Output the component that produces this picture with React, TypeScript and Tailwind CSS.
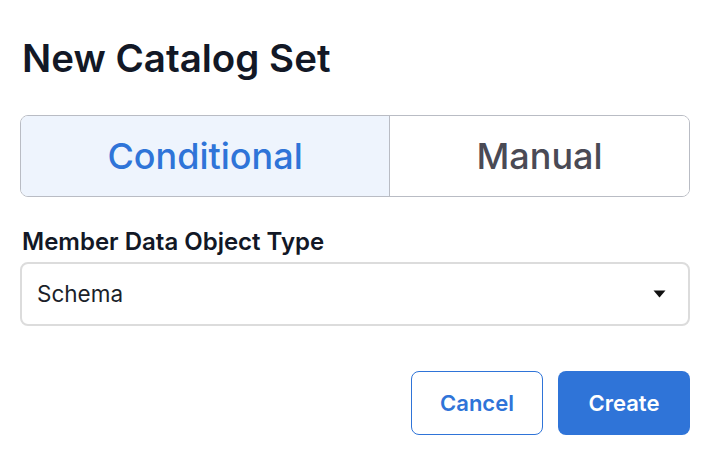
export default function App() {
  return (
    <div className="h-[452px] w-[706px] bg-white pl-5 pr-4 pt-[31px] font-['Inter',sans-serif]">
      <h1 className="pl-[2px] text-[38.5px] font-semibold leading-[54px] text-[#121826]">
        New Catalog Set
      </h1>

      <div className="mt-[30px] flex h-[82px] overflow-hidden rounded-lg border border-[#b9bcc4]">
        <button
          type="button"
          className="flex-auto border-r border-[#b9bcc4] bg-[#eef4fd] text-[36px] font-medium text-[#2f74d8]"
        >
          Conditional
        </button>
        <button type="button" className="flex-auto bg-white text-[36px] font-medium text-[#4a4a55]">
          Manual
        </button>
      </div>

      <label className="mt-[29px] block pl-[2px] text-[24px] font-semibold leading-[32px] text-[#121826]">
        Member Data Object Type
      </label>
      <div className="mt-[4px] flex h-[64px] items-center justify-between rounded-lg border-2 border-[#dcdcdc] pl-[15px] pr-[22px]">
        <span className="text-[22.5px] text-[#1b1f2a]">Schema</span>
        <svg width="13" height="8" viewBox="0 0 13 8">
          <path d="M0.5 0.5 L12.5 0.5 L6.5 7.5 Z" fill="#111" />
        </svg>
      </div>

      <div className="mt-[45px] flex justify-end gap-[15px]">
        <button
          type="button"
          className="h-[64px] w-[132px] rounded-lg border border-[#2f74d8] bg-white text-[22px] font-semibold text-[#2f74d8]"
        >
          Cancel
        </button>
        <button
          type="button"
          className="h-[64px] w-[132px] rounded-lg bg-[#2f74d8] text-[22px] font-semibold text-white"
        >
          Create
        </button>
      </div>
    </div>
  );
}
